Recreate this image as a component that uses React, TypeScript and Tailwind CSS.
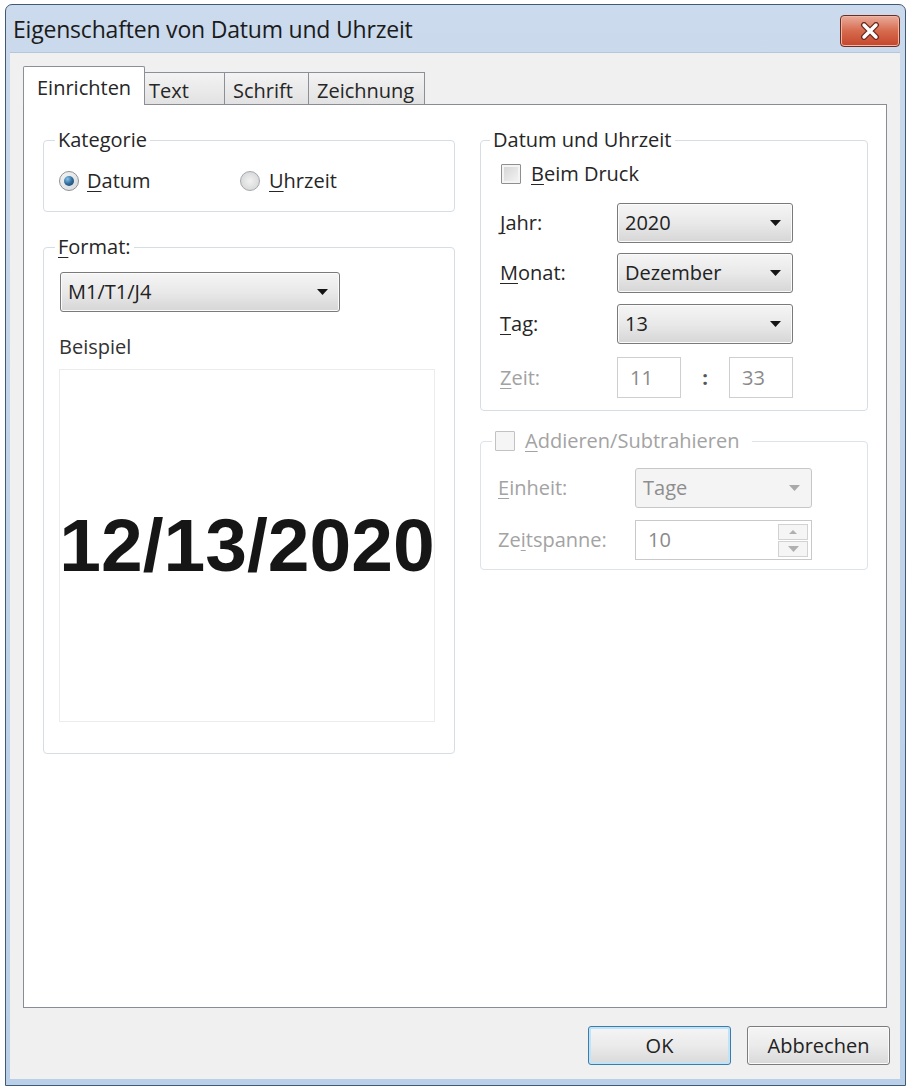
import React, { FC, ReactNode } from 'react'
import clsx from 'clsx'

// Access key letter, underlined like in classic Windows dialogs
const Key: FC<{ children: ReactNode }> = ({ children }) => (
    <span className="underline decoration-1 underline-offset-[3px]">{children}</span>
)

const Arrow: FC<{ color: string }> = ({ color }) => (
    <svg width="11" height="6" viewBox="0 0 11 6">
        <path d="M0 0h11L5.5 6z" fill={color} />
    </svg>
)

const Combo: FC<{ value: string; disabled?: boolean; className?: string }> = ({ value, disabled, className }) => (
    <div
        className={clsx(
            'flex h-[40px] items-center justify-between rounded-[3px] border pl-[7px] pr-[11px]',
            disabled
                ? 'border-[#c5c8cb] bg-[#f4f4f4] text-[#8e8e8e]'
                : 'border-[#7a7a7a] bg-linear-to-b from-[#f5f5f5] via-[#e9e9e9] to-[#d6d6d6] text-[#222] shadow-[inset_0_0_0_1px_#fbfbfb]',
            className
        )}
    >
        <span>{value}</span>
        <Arrow color={disabled ? '#a9a9a9' : '#141414'} />
    </div>
)

const Radio: FC<{ checked?: boolean }> = ({ checked }) => (
    <span
        className={clsx(
            'flex h-[20px] w-[20px] items-center justify-center rounded-full border',
            checked
                ? 'border-[#8c9296] bg-linear-to-br from-[#f4f4f4] to-[#d8dadc]'
                : 'border-[#a5a8ab] bg-radial from-[#f2f2f2] to-[#cfd0d1]'
        )}
    >
        {checked && (
            <span className="h-[10px] w-[10px] rounded-full bg-radial-[at_35%_30%] from-[#8cc2e8] via-[#2e6b9c] to-[#173f63]" />
        )}
    </span>
)

const Check: FC<{ disabled?: boolean }> = ({ disabled }) => (
    <span
        className={clsx(
            'block h-[20px] w-[20px] rounded-[1px] border',
            disabled
                ? 'border-[#c2c2c2] bg-[#f5f5f5]'
                : 'border-[#8f8f8f] bg-linear-to-br from-[#d2d2d2] to-[#f6f6f6] shadow-[inset_0_0_0_2px_#f4f4f4]'
        )}
    />
)

const Tab: FC<{ label: string; selected?: boolean; className?: string }> = ({ label, selected, className }) => (
    <div
        className={clsx(
            'border border-[#8c8f97] border-b-0',
            selected
                ? 'relative z-10 -mb-[1px] h-[39px] rounded-t-[2px] bg-white pt-[9px]'
                : 'h-[32px] border-l-0 bg-linear-to-b from-[#f3f3f3] to-[#e2e2e2] pt-[6px]',
            className
        )}
    >
        {label}
    </div>
)

const DialogButton: FC<{ label: string; primary?: boolean }> = ({ label, primary }) => (
    <button
        className={clsx(
            'h-[39px] w-[143px] rounded-[3px] border bg-linear-to-b from-[#f5f5f5] via-[#ebebeb] to-[#d9d9d9] text-[#222]',
            primary
                ? 'border-[#3d7bad] shadow-[inset_0_0_0_2px_#bfe3f7]'
                : 'border-[#7c7c7c] shadow-[inset_0_0_0_1px_#fbfbfb]'
        )}
    >
        {label}
    </button>
)

const CloseButton = () => (
    <div className="flex h-[32px] w-[60px] items-center justify-center rounded-[4px] border border-[#6e2d20] bg-linear-to-b from-[#e9ac9c] via-[#d66a4d] to-[#c4452b] shadow-[inset_0_0_0_1px_#f0b7a5]">
        <svg width="20" height="18" viewBox="0 0 20 18">
            <path d="M4 3l12 12M16 3L4 15" stroke="#6b2a1d" strokeWidth="6" strokeLinecap="round" />
            <path d="M4 3l12 12M16 3L4 15" stroke="#ffffff" strokeWidth="3.4" strokeLinecap="round" />
        </svg>
    </div>
)

export default function App() {
    return (
        <div className="h-[1087px] w-[909px] bg-white pl-[5px] pt-[4px] font-['Open_Sans',sans-serif] text-[20px] leading-[24px] text-[#262626]">
            <div className="flex h-[1082px] w-[901px] flex-col rounded-t-[7px] border border-[#3f5a76] bg-linear-to-b from-[#cbdaec] via-[#c0d3e9] to-[#b9d0e8] pb-[6px] pl-[4px] pr-[5px]">
                {/* title bar */}
                <div className="flex h-[47px] items-start justify-between">
                    <span className="pl-[3px] pt-[10px] text-[23px] leading-[28px] tracking-[-0.2px] text-[#1b1b1b]">
                        Eigenschaften von Datum und Uhrzeit
                    </span>
                    <div className="pt-[10px]">
                        <CloseButton />
                    </div>
                </div>

                <div className="flex flex-1 flex-col border-t border-[#b4c6da] bg-[#f0f0f0] px-[13px] pt-[13px]">
                    <div className="flex items-end">
                        <Tab label="Einrichten" selected className="w-[122px] pl-[13px]" />
                        <Tab label="Text" className="w-[80px] pl-[4px]" />
                        <Tab label="Schrift" className="w-[84px] pl-[8px]" />
                        <Tab label="Zeichnung" className="w-[116px] pl-[8px]" />
                    </div>

                    <div className="grid flex-1 grid-cols-[412px_388px] content-start gap-x-[25px] border border-[#898c95] bg-white pl-[19px] pt-[23px]">
                        {/* left column */}
                        <div className="flex min-w-0 flex-col gap-[23px]">
                            <fieldset className="min-w-0 rounded-[4px] border border-[#d6dee4] pb-[18px] pl-[15px] pt-[17px]">
                                <legend className="-ml-[4px] px-[3px]">Kategorie</legend>
                                <div className="flex items-center">
                                    <div className="flex w-[181px] items-center gap-[8px]">
                                        <Radio checked />
                                        <span><Key>D</Key>atum</span>
                                    </div>
                                    <div className="flex items-center gap-[9px]">
                                        <Radio />
                                        <span><Key>U</Key>hrzeit</span>
                                    </div>
                                </div>
                            </fieldset>

                            <fieldset className="min-w-0 rounded-[4px] border border-[#d6dee4] pb-[31px] pl-[15px] pr-[19px] pt-[13px]">
                                <legend className="-ml-[4px] px-[3px]"><Key>F</Key>ormat:</legend>
                                <Combo value="M1/T1/J4" className="ml-[1px] w-[280px]" />
                                <div className="mt-[23px] text-[#333]">Beispiel</div>
                                <div className="mt-[10px] flex h-[353px] items-center justify-center overflow-hidden border border-[#ececec]">
                                    <span className="font-['Liberation_Sans',Arial,sans-serif] text-[75px] font-bold leading-none text-[#161616]">
                                        12/13/2020
                                    </span>
                                </div>
                            </fieldset>
                        </div>

                        {/* right column */}
                        <div className="flex min-w-0 flex-col gap-[18px]">
                            <fieldset className="min-w-0 rounded-[4px] border border-[#d6dee4] pb-[12px] pl-[19px] pt-[10px]">
                                <legend className="-ml-[10px] px-[3px]">Datum und Uhrzeit</legend>
                                <label className="flex items-center gap-[10px] pl-[1px]">
                                    <Check />
                                    <span><Key>B</Key>eim Druck</span>
                                </label>
                                <div className="mt-[17px] flex items-center">
                                    <span className="w-[117px]"><Key>J</Key>ahr:</span>
                                    <Combo value="2020" className="w-[176px]" />
                                </div>
                                <div className="mt-[10px] flex items-center">
                                    <span className="w-[117px]"><Key>M</Key>onat:</span>
                                    <Combo value="Dezember" className="w-[176px]" />
                                </div>
                                <div className="mt-[11px] flex items-center">
                                    <span className="w-[117px]"><Key>T</Key>ag:</span>
                                    <Combo value="13" className="w-[176px]" />
                                </div>
                                <div className="mt-[13px] flex items-center text-[#a2a2a2]">
                                    <span className="w-[117px]"><Key>Z</Key>eit:</span>
                                    <div className="flex h-[41px] w-[64px] items-center border border-[#cfcfcf] pl-[12px] text-[#8a8a8a]">11</div>
                                    <span className="w-[48px] text-center font-bold text-[#555]">:</span>
                                    <div className="flex h-[41px] w-[64px] items-center border border-[#cfcfcf] pl-[12px] text-[#8a8a8a]">33</div>
                                </div>
                            </fieldset>

                            <fieldset className="min-w-0 rounded-[4px] border border-[#dde3e8] pb-[9px] pl-[17px] pt-[15px] text-[#a3a3a3]">
                                <legend className="-ml-[6px] flex items-center gap-[10px] pl-[3px] pr-[12px]">
                                    <Check disabled />
                                    <span><Key>A</Key>ddieren/Subtrahieren</span>
                                </legend>
                                <div className="flex items-center">
                                    <span className="w-[137px]"><Key>E</Key>inheit:</span>
                                    <Combo value="Tage" disabled className="w-[177px]" />
                                </div>
                                <div className="mt-[12px] flex items-center">
                                    <span className="w-[137px]">Ze<Key>i</Key>tspanne:</span>
                                    <div className="flex h-[40px] w-[177px] items-center justify-between border border-[#c9c9c9] pl-[12px] pr-[3px] text-[#8a8a8a]">
                                        <span>10</span>
                                        <div className="flex w-[30px] flex-col gap-[1px]">
                                            <div className="flex h-[16px] items-center justify-center border border-[#d2d2d2] bg-[#f5f5f5]">
                                                <svg width="8" height="4" viewBox="0 0 8 4"><path d="M0 4h8L4 0z" fill="#b0b0b0" /></svg>
                                            </div>
                                            <div className="flex h-[16px] items-center justify-center border border-[#d2d2d2] bg-[#f5f5f5]">
                                                <Arrow color="#b0b0b0" />
                                            </div>
                                        </div>
                                    </div>
                                </div>
                            </fieldset>
                        </div>
                    </div>

                    <div className="-mr-[3px] flex justify-end gap-[16px] pb-[14px] pt-[18px]">
                        <DialogButton label="OK" primary />
                        <DialogButton label="Abbrechen" />
                    </div>
                </div>
            </div>
        </div>
    )
}
